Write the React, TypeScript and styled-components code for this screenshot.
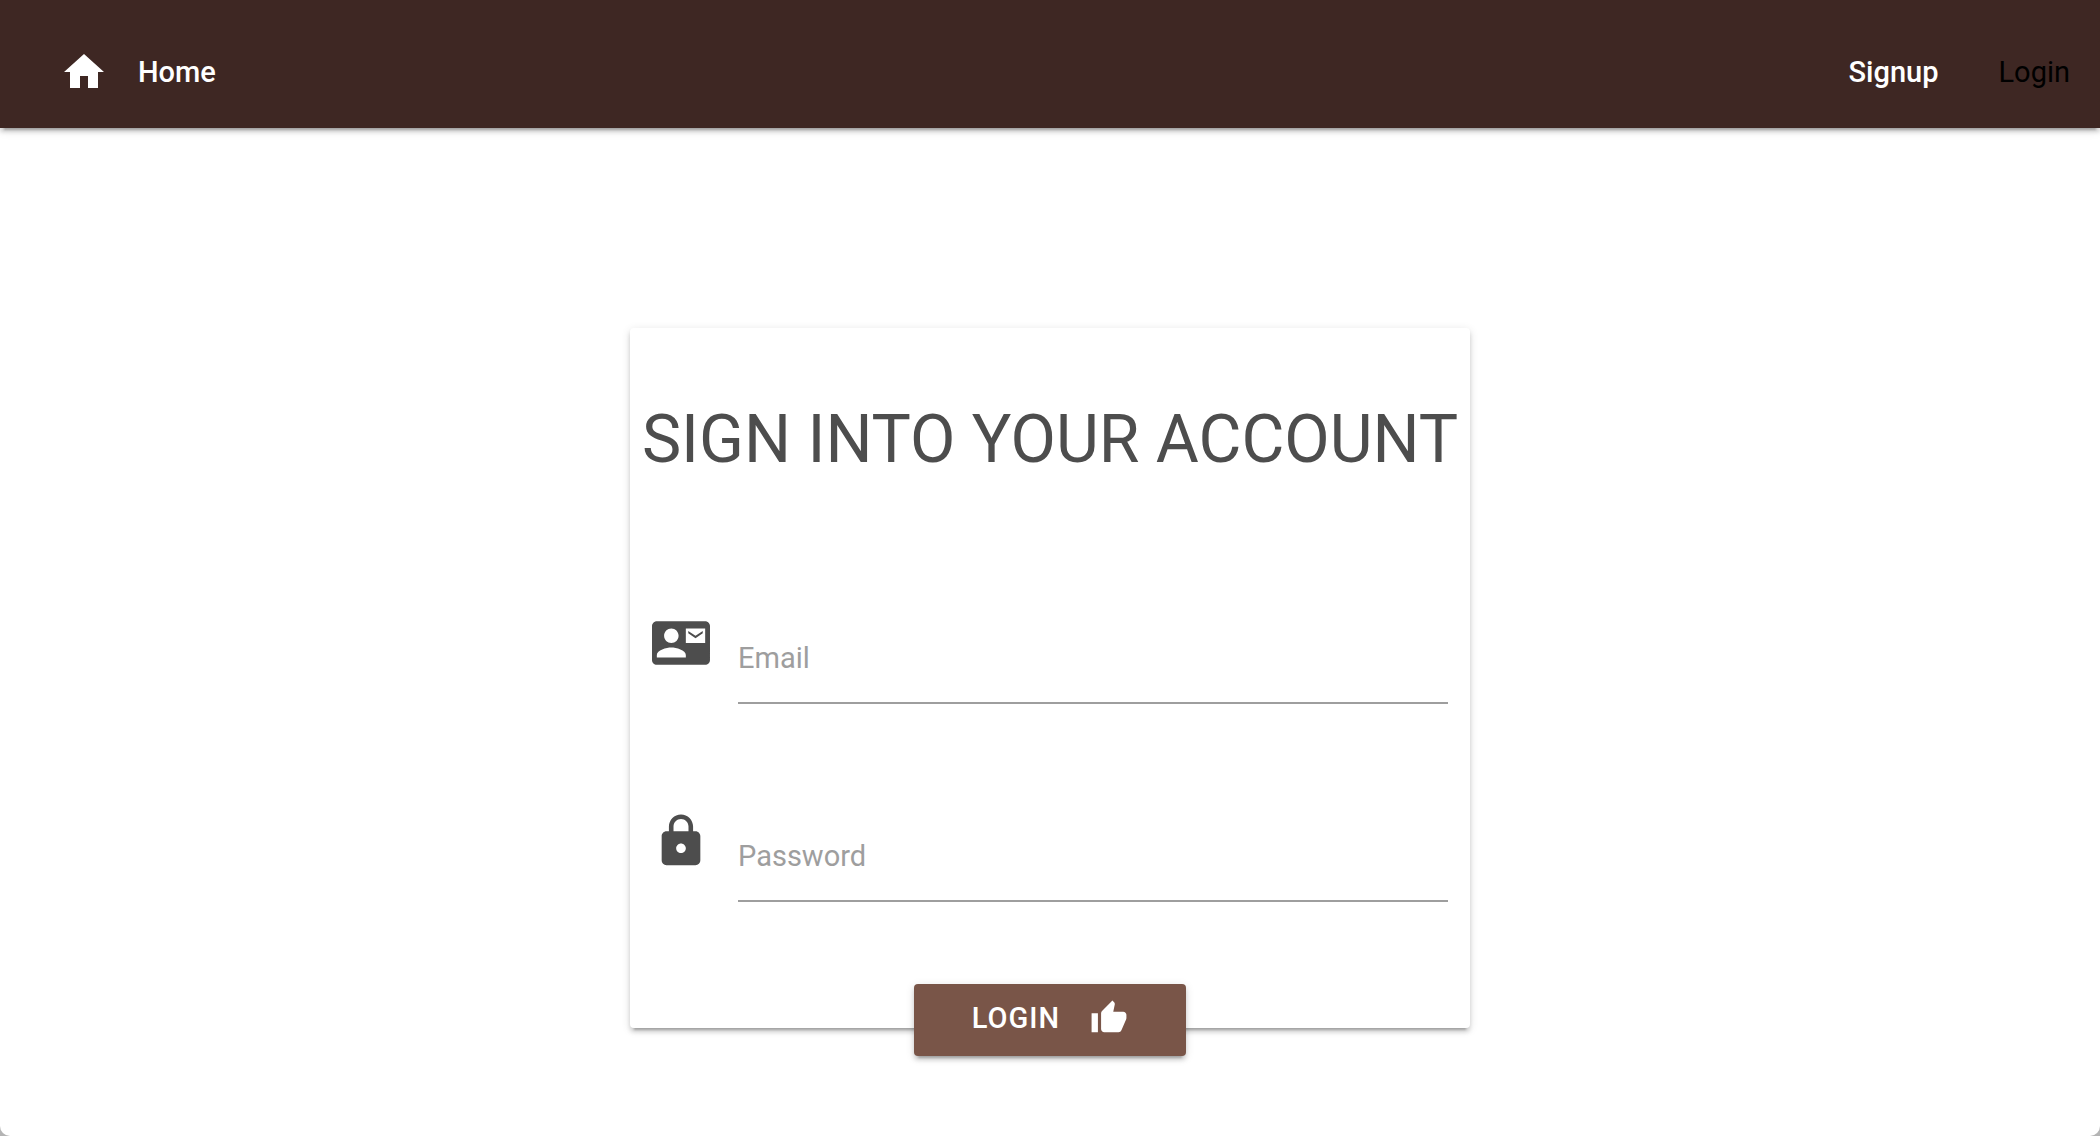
import React from "react";
import styled, { createGlobalStyle } from "styled-components";
import { MdContactMail, MdHome, MdLock, MdThumbUp } from "react-icons/md";

const GlobalStyle = createGlobalStyle`
  *, *::before, *::after { box-sizing: border-box; }
  body {
    margin: 0;
    background: #b4b4b4;
    font-family: Roboto, "Liberation Sans", sans-serif;
    font-size: 29px;
    color: #4d4d4d;
  }
`;

const raised = `
  box-shadow:
    0 4px 4px 0 rgba(0, 0, 0, 0.14),
    0 2px 10px 0 rgba(0, 0, 0, 0.12),
    0 6px 2px -4px rgba(0, 0, 0, 0.2);
`;

const Page = styled.div`
  min-height: 100vh;
  display: flex;
  flex-direction: column;
  background: #fff;
  border-radius: 0 0 10px 10px;
`;

const NavBar = styled.nav`
  display: flex;
  justify-content: space-between;
  padding: 16px 0 0 30px;
  background: #3e2723;
  ${raised}
`;

const NavGroup = styled.div`
  display: flex;
`;

const NavLink = styled.a<{ $active?: boolean }>`
  display: flex;
  align-items: center;
  gap: 30px;
  padding: 0 30px;
  line-height: 112px;
  font-weight: ${(p) => (p.$active ? 400 : 500)};
  color: ${(p) => (p.$active ? "#000" : "#fff")};
  text-decoration: none;
`;

const Main = styled.main`
  display: flex;
  justify-content: center;
  padding: 200px 0 100px;
`;

const Card = styled.section`
  width: 40%;
  min-width: 840px;
  padding-top: 76px;
  border-radius: 4px;
  background: #fff;
  ${raised}
`;

const Title = styled.h1`
  margin: 0 0 138px;
  font-size: 66px;
  font-weight: 400;
  line-height: 72px;
  text-align: center;
  white-space: nowrap;
  text-transform: uppercase;
`;

const Form = styled.form`
  display: flex;
  flex-direction: column;
  padding: 0 22px;
`;

const Fields = styled.div`
  display: grid;
  gap: 108px;
  margin-bottom: 82px;
`;

const Field = styled.div`
  display: grid;
  grid-template-columns: 58px 1fr;
  column-gap: 28px;
`;

const InputBox = styled.div`
  display: grid;
  height: 90px;
  border-bottom: 2px solid #9e9e9e;
`;

const Label = styled.label`
  grid-area: 1 / 1;
  align-self: center;
  color: #9e9e9e;
  cursor: text;
`;

const Input = styled.input`
  grid-area: 1 / 1;
  width: 100%;
  padding: 0;
  border: 0;
  outline: 0;
  background: transparent;
  font: inherit;
  color: inherit;
`;

const SubmitButton = styled.button`
  display: flex;
  align-items: center;
  align-self: center;
  gap: 30px;
  height: 72px;
  margin: 0 0 -28px;
  padding: 0 58px 4px;
  border: 0;
  border-radius: 4px;
  background: #795548;
  color: #fff;
  font: inherit;
  font-weight: 500;
  letter-spacing: 1px;
  text-transform: uppercase;
  cursor: pointer;
  ${raised}
`;

export default function App() {
  return (
    <>
      <GlobalStyle />
      <Page>
        <NavBar>
          <NavGroup>
            <NavLink href="#home">
              <MdHome size={48} />
              Home
            </NavLink>
          </NavGroup>
          <NavGroup>
            <NavLink href="#signup">Signup</NavLink>
            <NavLink href="#login" $active>
              Login
            </NavLink>
          </NavGroup>
        </NavBar>
        <Main>
          <Card>
            <Title>Sign into your account</Title>
            <Form onSubmit={(e) => e.preventDefault()}>
              <Fields>
                <Field>
                  <MdContactMail size={58} />
                  <InputBox>
                    <Label htmlFor="email">Email</Label>
                    <Input id="email" type="email" />
                  </InputBox>
                </Field>
                <Field>
                  <MdLock size={58} />
                  <InputBox>
                    <Label htmlFor="password">Password</Label>
                    <Input id="password" type="password" />
                  </InputBox>
                </Field>
              </Fields>
              <SubmitButton type="submit">
                Login
                <MdThumbUp size={38} />
              </SubmitButton>
            </Form>
          </Card>
        </Main>
      </Page>
    </>
  );
}
